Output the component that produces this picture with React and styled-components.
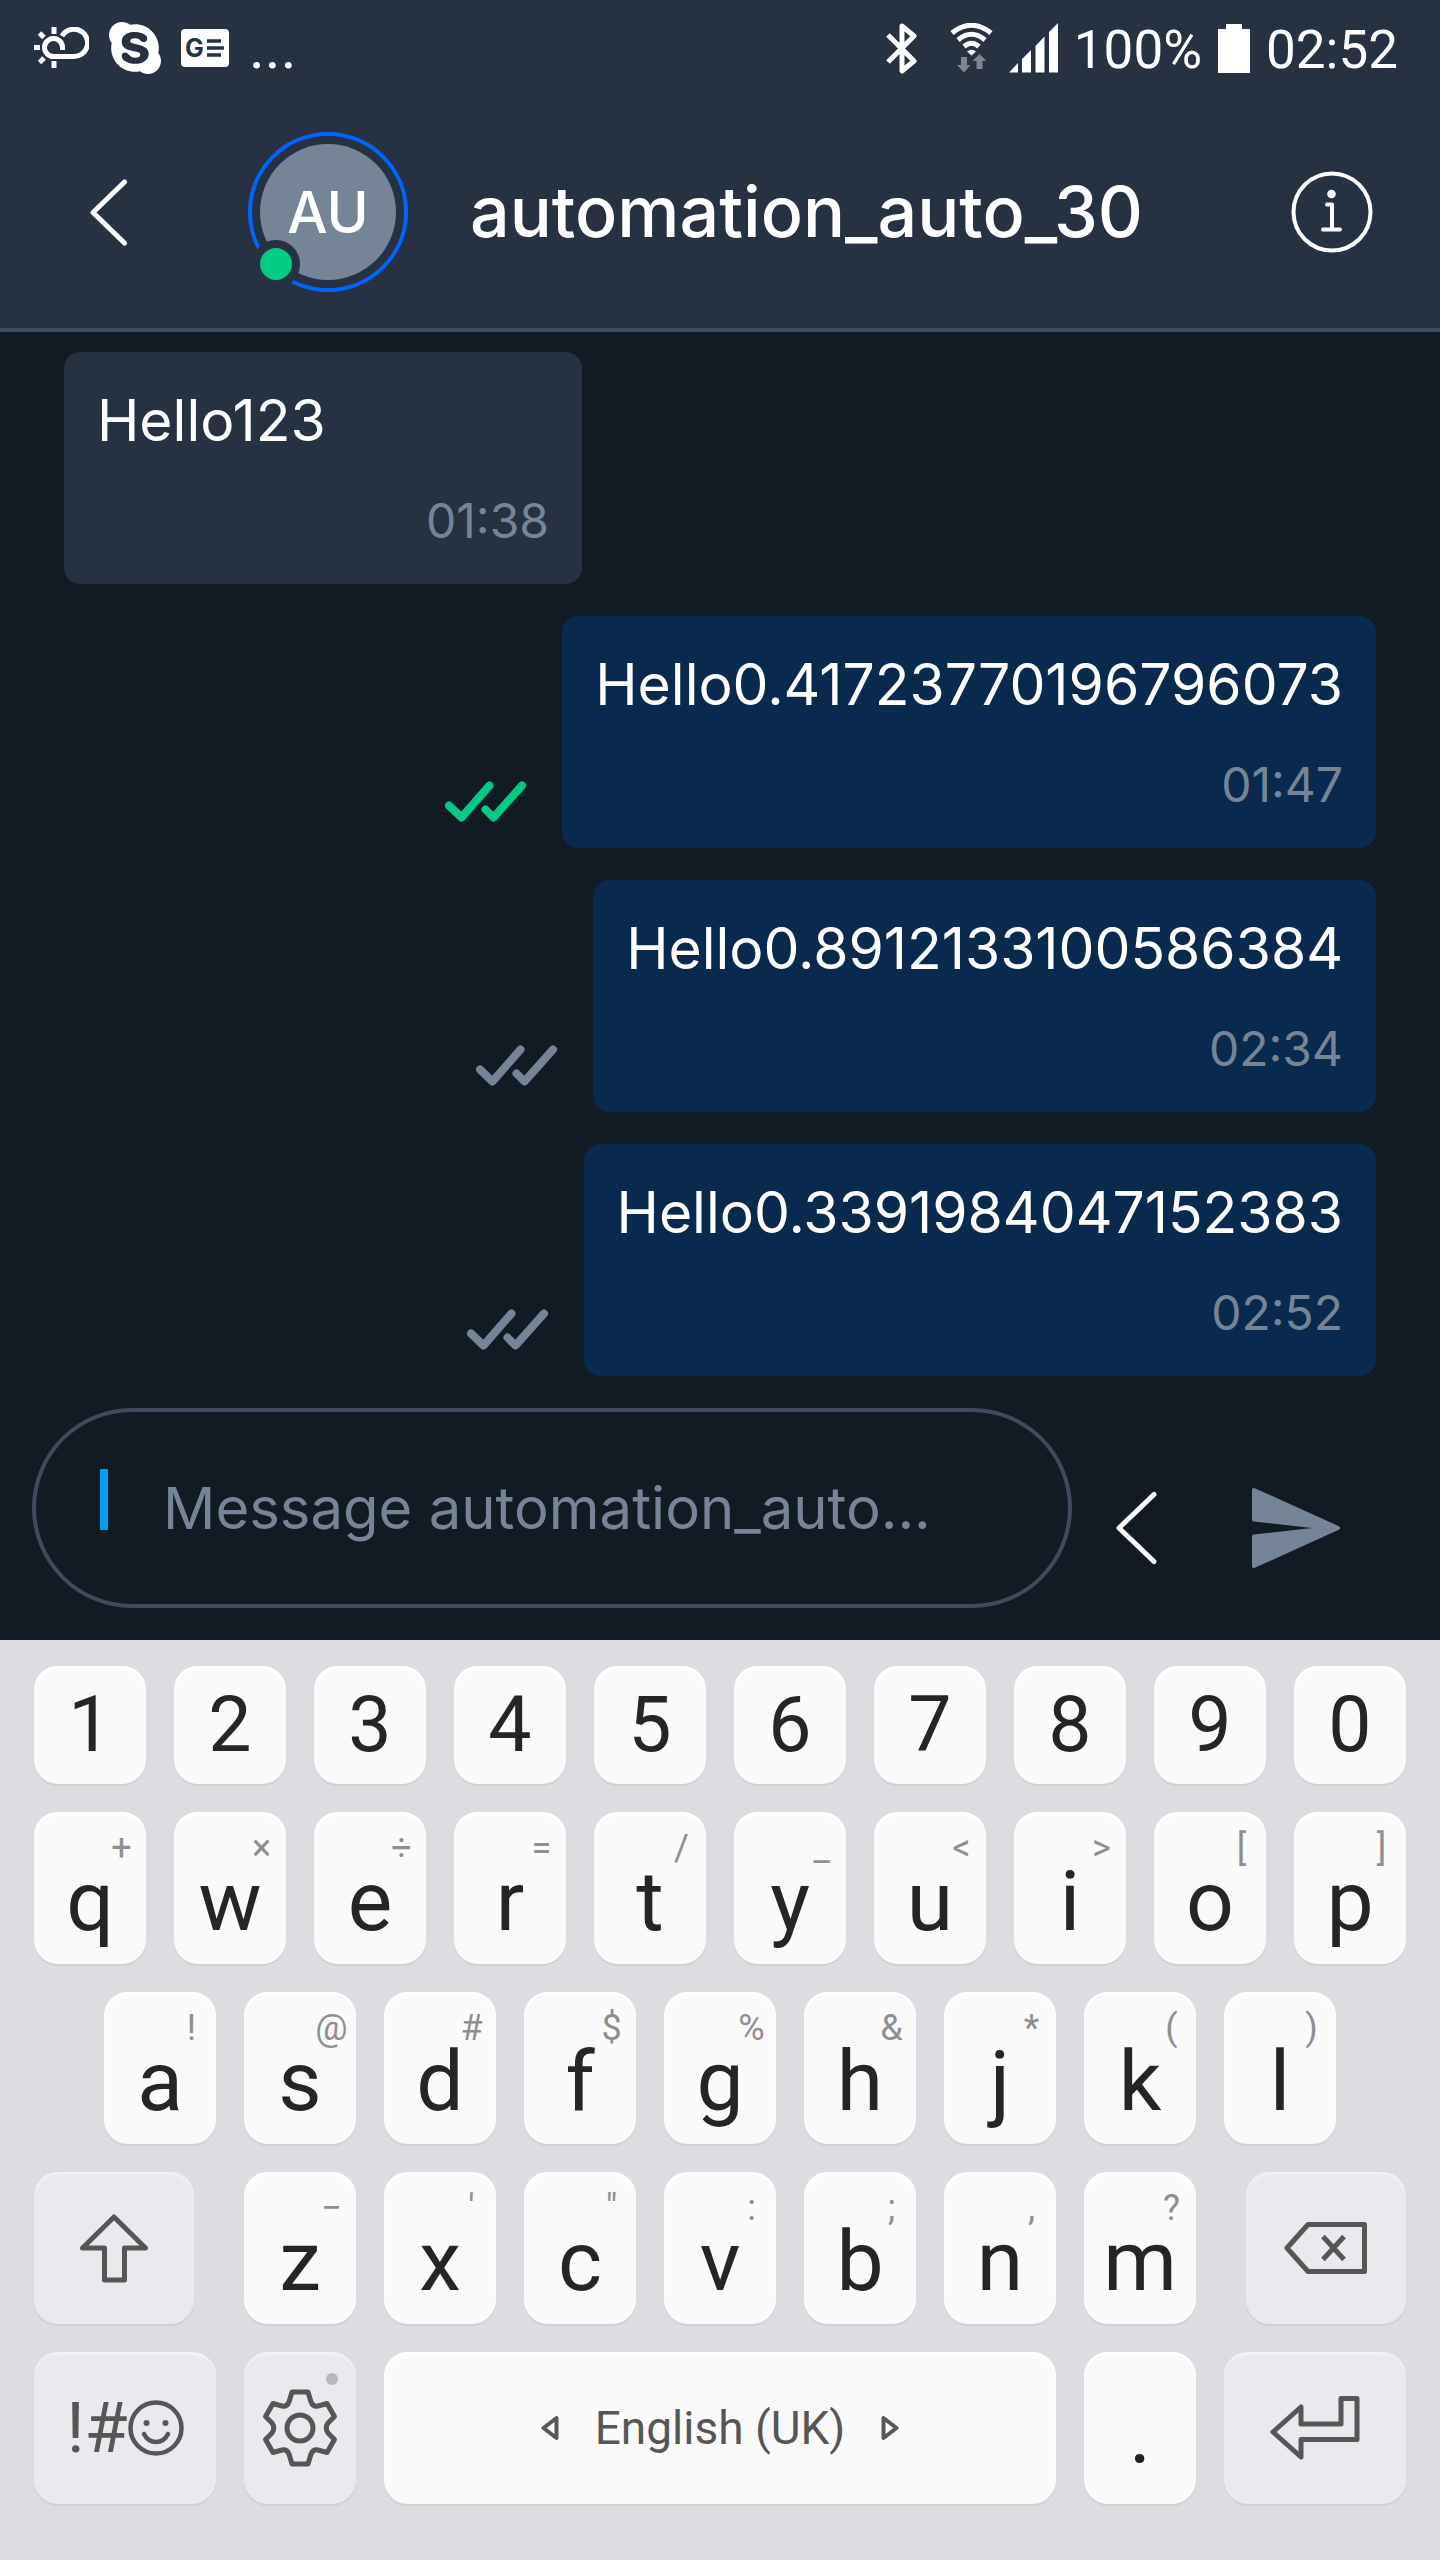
import React from "react";
import styled, { createGlobalStyle, css } from "styled-components";
import { FaSkype } from "react-icons/fa";

const color = {
  panel: "#263141",
  page: "#121a24",
  line: "#3d4b5c",
  mine: "#09294f",
  muted: "#768497",
  green: "#00cb82",
  ring: "#0064ff",
  caret: "#00a0ee",
  board: "#dcdde1",
  key: "#fafafa",
  fnKey: "#e9eaee",
  ink: "#252525",
  glyph: "#555656",
};

const GlobalStyle = createGlobalStyle`
  *, *::before, *::after { box-sizing: border-box; }
  body { margin: 0; background: ${color.page}; }
  button, input { font: inherit; color: inherit; margin: 0; }
  svg { display: block; flex: none; }
`;

const Screen = styled.div`
  display: flex;
  flex-direction: column;
  min-height: 100vh;
  background: ${color.page};
  color: #fff;
  font-family: Inter, "Liberation Sans", sans-serif;
`;

/* Status bar */
const StatusBar = styled.div`
  display: flex;
  align-items: center;
  justify-content: space-between;
  height: 96px;
  padding: 0 42px 0 33px;
  background: ${color.panel};
  font-family: Roboto, "Liberation Sans", sans-serif;
`;
const StatusGroup = styled.div`
  display: flex;
  align-items: center;
  gap: ${(p) => p.$gap}px;
`;
const StatusText = styled.span`
  font-size: 53px;
  line-height: 60px;
  padding-top: 4px;
`;
const More = styled.span`
  font-size: 60px;
  line-height: 60px;
`;
const SkypeIcon = styled(FaSkype)`
  width: 52px;
  height: 60px;
`;

/* Chat header */
const Header = styled.header`
  display: flex;
  align-items: center;
  height: 236px;
  padding: 0 67px 0 90px;
  background: ${color.panel};
  border-bottom: 4px solid ${color.line};
`;
const IconButton = styled.button`
  display: flex;
  flex: none;
  padding: 0;
  border: 0;
  background: none;
`;
const Avatar = styled.div`
  position: relative;
  flex: none;
  width: 160px;
  height: 160px;
  margin-left: 120px;
  padding: 8px;
  border: 4px solid ${color.ring};
  border-radius: 50%;
`;
const Initials = styled.div`
  display: flex;
  align-items: center;
  justify-content: center;
  height: 100%;
  border-radius: 50%;
  background: ${color.muted};
  font-size: 57px;
  font-weight: 500;
`;
const Presence = styled.span`
  position: absolute;
  left: 0;
  bottom: 0;
  width: 48px;
  height: 48px;
  border: 8px solid ${color.panel};
  border-radius: 50%;
  background: ${color.green};
`;
const Title = styled.h1`
  flex: 1;
  min-width: 0;
  margin: 0 0 0 62px;
  font-size: 70px;
  line-height: 84px;
  font-weight: 500;
`;

/* Messages */
const Messages = styled.main`
  display: flex;
  flex: 1 0 auto;
  flex-direction: column;
  gap: 32px;
  padding: 20px 64px 32px;
`;
const MessageRow = styled.div`
  display: flex;
  align-items: flex-end;
  justify-content: ${(p) => (p.$mine ? "flex-end" : "flex-start")};
  gap: 35px;
`;
const Bubble = styled.div`
  display: flex;
  flex-direction: column;
  gap: 40px;
  min-width: 518px;
  padding: 36px 33px;
  border-radius: 16px;
  background: ${(p) => (p.$mine ? color.mine : color.panel)};
`;
const Body = styled.p`
  margin: 0;
  font-size: 57px;
  line-height: 66px;
`;
const Time = styled.time`
  align-self: flex-end;
  color: ${color.muted};
  font-size: 48px;
  line-height: 54px;
`;
const Receipt = styled.svg`
  margin-bottom: 25px;
  color: ${(p) => (p.$read ? color.green : color.muted)};
`;

/* Composer */
const Composer = styled.form`
  display: flex;
  align-items: flex-end;
  padding: 0 100px 32px 32px;
`;
const Field = styled.label`
  display: flex;
  flex: 1;
  min-width: 0;
  height: 200px;
  padding: 0 60px 0 64px;
  border: 4px solid ${color.line};
  border-radius: 100px;
`;
const Caret = styled.span`
  flex: none;
  width: 8px;
  height: 61px;
  margin-top: 57px;
  background: ${color.caret};
`;
const TextBox = styled.input`
  flex: 1;
  min-width: 0;
  padding: 0 0 0 55px;
  border: 0;
  outline: 0;
  background: none;
  font-size: 58px;
  &::placeholder { color: ${color.muted}; opacity: 1; }
`;
const ComposerButton = styled(IconButton)`
  margin: 0 0 40px ${(p) => p.$space}px;
`;

/* Keyboard */
const Keyboard = styled.section`
  display: flex;
  flex-direction: column;
  gap: 28px;
  padding: 26px 34px 56px;
  background: ${color.board};
  font-family: Roboto, "Liberation Sans", sans-serif;
`;
const KeyRow = styled.div`
  display: flex;
  gap: 28px;
  padding: 0 ${(p) => p.$inset || 0}px;
`;
const Key = styled.button`
  position: relative;
  display: flex;
  align-items: center;
  justify-content: center;
  flex: ${(p) => p.$span || 112} 1 0;
  min-width: 0;
  height: ${(p) => (p.$short ? 118 : 152)}px;
  padding: ${(p) => p.$drop || 0}px 0 0;
  border: 0;
  border-radius: 24px;
  background: ${(p) => (p.$fn ? color.fnKey : color.key)};
  box-shadow: 0 2px 1px rgba(0, 0, 0, 0.06),
    inset 0 3px 2px rgba(255, 255, 255, ${(p) => (p.$fn ? 0.4 : 1)});
  color: ${(p) => (p.$fn ? color.glyph : color.ink)};
  font-size: ${(p) => (p.$short ? 77 : 84)}px;
  line-height: 1;
  ${(p) => p.$after && css`margin-right: 22px;`}
  ${(p) => p.$before && css`margin-left: 22px;`}
`;
const Hint = styled.span`
  position: absolute;
  top: 18px;
  right: 0;
  width: 49px;
  color: #8f8f8f;
  font-size: 36px;
  line-height: 36px;
  text-align: center;
`;
const HintDot = styled.span`
  position: absolute;
  top: 21px;
  right: 18px;
  width: 12px;
  height: 12px;
  border-radius: 50%;
  background: #b8b8b8;
`;
const Symbols = styled.span`
  font-size: 70px;
`;
const Language = styled.span`
  margin: 0 36px;
  color: ${color.glyph};
  font-size: 46px;
`;

const stroke = (width) => ({
  fill: "none",
  stroke: "currentColor",
  strokeWidth: width,
  strokeLinecap: "round",
  strokeLinejoin: "round",
});

const WeatherIcon = () => (
  <svg width="56" height="42" viewBox="0 0 56 42" fill="none" stroke="currentColor" strokeWidth="5">
    <path d="M29 9A13.7 13.7 0 1 1 39.7 29.5H20.5A9 9 0 1 1 29.5 20.5V23" />
    <path d="M21 0V7M21 34V41M1 20.5H7M6.500 6L11 10.500M11 31L6.500 35.500" />
  </svg>
);
const NewsIcon = () => (
  <svg width="48" height="38" viewBox="0 0 48 38">
    <rect width="48" height="38" rx="4" fill="#fff" />
    <text x="13.500" y="28" textAnchor="middle" fontFamily="Inter, sans-serif" fontSize="25" fontWeight="700" fill={color.panel}>G</text>
    <path d="M26 12H40M26 19H43M26 26H40" stroke={color.panel} strokeWidth="3.500" />
  </svg>
);
const BluetoothIcon = () => (
  <svg width="48" height="51" viewBox="0 0 48 51" {...stroke(5)} strokeLinecap="butt">
    <path d="M2 12L28 38L16 48V3L28 13L2 39" />
  </svg>
);
const WifiIcon = () => (
  <svg width="43" height="50" viewBox="0 0 43 50">
    <path d="M2 10Q21.500 -5.500 41 10M8 17Q21.500 5.500 35 17M14 23.500Q21.500 17 29 23.500" fill="none" stroke="currentColor" strokeWidth="5" />
    <path d="M17 28.500Q21.500 25 26 28.500L21.500 32.500Z" fill="currentColor" />
    <path d="M11 34H17V42H20.500L14 49.500L7 42H11ZM26.500 46H32.500V38H36.500L29.500 31L22.500 38H26.500Z" fill="#80868f" />
  </svg>
);
const SignalIcon = () => (
  <svg width="49" height="50" viewBox="0 0 49 50" fill="currentColor">
    <path d="M0 49.500L9 40V49.500ZM13 36L22 27V49.500H13ZM26.500 23L35.500 13.500V49.500H26.500ZM40 9L49 0V49.500H40Z" />
  </svg>
);
const BatteryIcon = () => (
  <svg width="32" height="49" viewBox="0 0 32 49" fill="currentColor">
    <path d="M8 0H24V5H32V49H0V5H8Z" />
  </svg>
);
const BackIcon = () => (
  <svg width="38" height="68" viewBox="0 0 38 68" {...stroke(5)}>
    <path d="M34.500 4L3 34.500L34.500 65" />
  </svg>
);
const InfoIcon = () => (
  <svg width="82" height="82" viewBox="0 0 82 82" {...stroke(4)}>
    <circle cx="41" cy="41" r="38.500" />
    <circle cx="40.500" cy="23" r="4.300" fill="currentColor" stroke="none" />
    <path d="M36 33.500H41V58.500M32 58.500H49" />
  </svg>
);
const Ticks = ({ read }) => (
  <Receipt $read={read} width="82" height="42" viewBox="0 0 82 42" {...stroke(8)} role="img" aria-label={read ? "Read" : "Delivered"}>
    <path d="M4 24.500L16.500 36.500L44.500 4.500M40.500 28.500L48.500 36.500L77 4.500" />
  </Receipt>
);
const ExpandIcon = () => (
  <svg width="42" height="80" viewBox="0 0 42 80" {...stroke(5)}>
    <path d="M38 6.500L3 40L38 73.500" />
  </svg>
);
const SendIcon = () => (
  <svg width="88" height="80" viewBox="0 0 88 80" fill={color.muted} stroke={color.muted} strokeWidth="4" strokeLinejoin="round">
    <path d="M2 2L86 40L2 78V48.500L78 40L2 31.500Z" />
  </svg>
);
const ShiftIcon = () => (
  <svg width="68" height="69" viewBox="0 0 68 69" {...stroke(5)}>
    <path d="M34 3L65.500 34H44.500V66H24.500V34H2.500Z" />
  </svg>
);
const DeleteIcon = () => (
  <svg width="84" height="52" viewBox="0 0 84 52" {...stroke(5)}>
    <path d="M24 2.500H80.500V49.500H24L3 26Z" />
    <path d="M39 14.500L60 37.500M60 14.500L39 37.500" strokeLinecap="butt" />
  </svg>
);
const SmileIcon = () => (
  <svg width="56" height="56" viewBox="0 0 56 56" {...stroke(4.5)}>
    <circle cx="28" cy="28" r="25.500" />
    <circle cx="18.500" cy="23" r="3" fill="currentColor" stroke="none" />
    <circle cx="37.500" cy="23" r="3" fill="currentColor" stroke="none" />
    <path d="M16 34Q20 42 28 42T40 34" />
  </svg>
);
const GearIcon = () => (
  <svg width="80" height="80" viewBox="-40 -40 80 80" {...stroke(5)}>
    <path d="M-8 -36H8L11 -26Q13 -21 18 -22L27 -24.500L34.500 -11.500L28 -5Q24.500 0 28 5L34.500 11.500L27 24.500L18 22Q13 21 11 26L8 36H-8L-11 26Q-13 21 -18 22L-27 24.500L-34.500 11.500L-28 5Q-24.500 0 -28 -5L-34.500 -11.500L-27 -24.500L-18 -22Q-13 -21 -11 -26Z" />
    <circle r="13" />
  </svg>
);
const EnterIcon = () => (
  <svg width="90" height="64" viewBox="0 0 90 64" {...stroke(5)}>
    <path d="M3 36L31 11V28H71V2.500H87V43.500H31V61Z" />
  </svg>
);
const LeftIcon = () => (
  <svg width="18" height="26" viewBox="0 0 18 26" {...stroke(4)} color={color.glyph}>
    <path d="M15.500 3V23L2.500 13Z" />
  </svg>
);
const RightIcon = () => (
  <svg width="18" height="26" viewBox="0 0 18 26" {...stroke(4)} color={color.glyph}>
    <path d="M2.500 3V23L15.500 13Z" />
  </svg>
);

const messages = [
  { text: "Hello123", time: "01:38" },
  { text: "Hello0.41723770196796073", time: "01:47", mine: true, read: true },
  { text: "Hello0.8912133100586384", time: "02:34", mine: true },
  { text: "Hello0.3391984047152383", time: "02:52", mine: true },
];

const digits = [..."1234567890"];
const topRow = ["q+", "w×", "e÷", "r=", "t/", "y_", "u<", "i>", "o[", "p]"];
const homeRow = ["a!", "s@", "d#", "f$", "g%", "h&", "j*", "k(", "l)"];
const bottomRow = ["z−", "x'", 'c"', "v:", "b;", "n,", "m?"];

const LetterKeys = ({ keys }) =>
  keys.map(([letter, hint]) => (
    <Key key={letter} type="button" $drop={28}>
      <Hint>{hint}</Hint>
      {letter}
    </Key>
  ));

export default function App() {
  return (
    <Screen>
      <GlobalStyle />
      <StatusBar>
        <StatusGroup $gap={20}>
          <WeatherIcon />
          <SkypeIcon />
          <NewsIcon />
          <More>...</More>
        </StatusGroup>
        <StatusGroup $gap={16}>
          <BluetoothIcon />
          <WifiIcon />
          <SignalIcon />
          <StatusText>100%</StatusText>
          <BatteryIcon />
          <StatusText>02:52</StatusText>
        </StatusGroup>
      </StatusBar>

      <Header>
        <IconButton type="button" aria-label="Back"><BackIcon /></IconButton>
        <Avatar>
          <Initials>AU</Initials>
          <Presence />
        </Avatar>
        <Title>automation_auto_30</Title>
        <IconButton type="button" aria-label="Info"><InfoIcon /></IconButton>
      </Header>

      <Messages>
        {messages.map((m) => (
          <MessageRow key={m.text} $mine={m.mine}>
            {m.mine && <Ticks read={m.read} />}
            <Bubble $mine={m.mine}>
              <Body>{m.text}</Body>
              <Time>{m.time}</Time>
            </Bubble>
          </MessageRow>
        ))}
      </Messages>

      <Composer onSubmit={(e) => e.preventDefault()}>
        <Field>
          <Caret />
          <TextBox type="text" aria-label="Message" placeholder="Message automation_auto..." />
        </Field>
        <ComposerButton type="button" aria-label="More options" $space={44}><ExpandIcon /></ComposerButton>
        <ComposerButton type="submit" aria-label="Send" $space={94}><SendIcon /></ComposerButton>
      </Composer>

      <Keyboard aria-label="Keyboard">
        <KeyRow>
          {digits.map((d) => <Key key={d} type="button" $short>{d}</Key>)}
        </KeyRow>
        <KeyRow><LetterKeys keys={topRow} /></KeyRow>
        <KeyRow $inset={70}><LetterKeys keys={homeRow} /></KeyRow>
        <KeyRow>
          <Key type="button" aria-label="Shift" $fn $span={160} $after><ShiftIcon /></Key>
          <LetterKeys keys={bottomRow} />
          <Key type="button" aria-label="Delete" $fn $span={160} $before><DeleteIcon /></Key>
        </KeyRow>
        <KeyRow>
          <Key type="button" $fn $span={182}><Symbols>!#</Symbols><SmileIcon /></Key>
          <Key type="button" aria-label="Settings" $fn><HintDot /><GearIcon /></Key>
          <Key type="button" $span={672}><LeftIcon /><Language>English (UK)</Language><RightIcon /></Key>
          <Key type="button" $drop={14}>.</Key>
          <Key type="button" aria-label="Enter" $fn $span={182}><EnterIcon /></Key>
        </KeyRow>
      </Keyboard>
    </Screen>
  );
}
